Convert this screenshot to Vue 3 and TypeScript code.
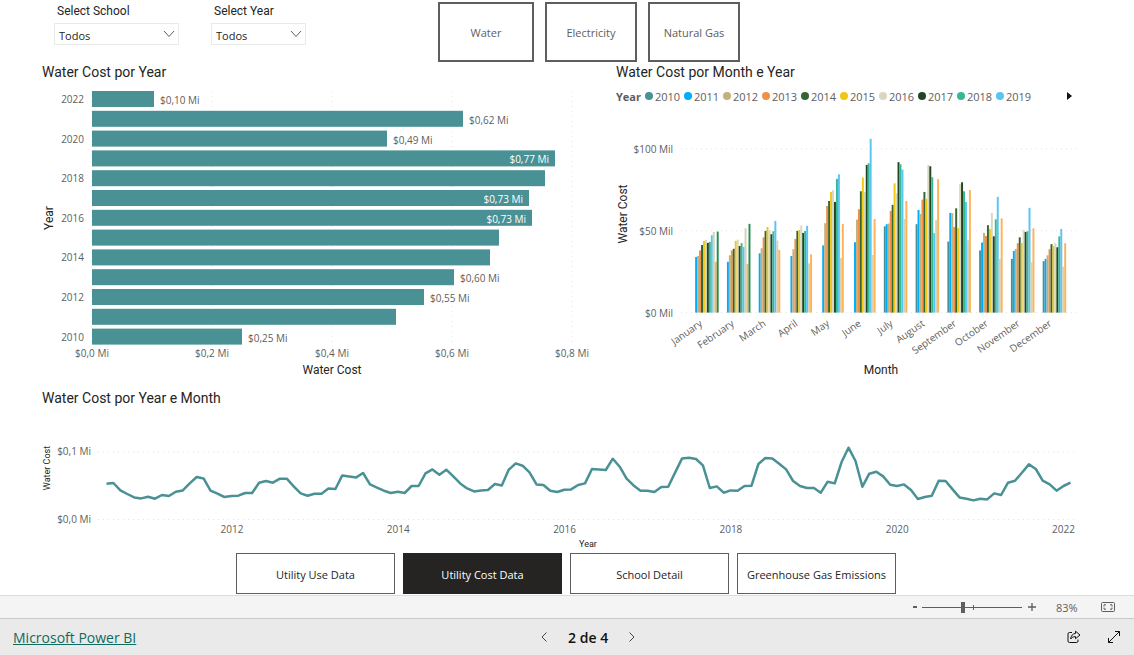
<script setup lang="ts">
import { ref } from 'vue'

interface YearBar { year: number; width: number; label?: string; inside?: boolean }
interface Series { year: number; color: string }

const school = ref('Todos')
const year = ref('Todos')
const zoomLevel = ref(83)
const zoomPosition = ref(41)

const utilities = ['Water', 'Electricity', 'Natural Gas']
const pages = ['Utility Use Data', 'Utility Cost Data', 'School Detail', 'Greenhouse Gas Emissions']
const activePage = ref('Utility Cost Data')

/* Horizontal bars, newest year first */
const yearBars: YearBar[] = [
  { year: 2022, width: 62, label: '$0,10 Mi' },
  { year: 2021, width: 371, label: '$0,62 Mi' },
  { year: 2020, width: 295, label: '$0,49 Mi' },
  { year: 2019, width: 463, label: '$0,77 Mi', inside: true },
  { year: 2018, width: 453 },
  { year: 2017, width: 437, label: '$0,73 Mi', inside: true },
  { year: 2016, width: 440, label: '$0,73 Mi', inside: true },
  { year: 2015, width: 407 },
  { year: 2014, width: 398 },
  { year: 2013, width: 362, label: '$0,60 Mi' },
  { year: 2012, width: 332, label: '$0,55 Mi' },
  { year: 2011, width: 304 },
  { year: 2010, width: 150, label: '$0,25 Mi' },
]
const barTop = (i: number) => 9 + i * 19.8
const yearTicks = ['$0,0 Mi', '$0,2 Mi', '$0,4 Mi', '$0,6 Mi', '$0,8 Mi'].map((label, i) => ({ label, x: 50 + i * 120 }))

/* Clustered columns, in thousands of dollars; null where the year has no reading */
const series: Series[] = [
  { year: 2010, color: '#499195' },
  { year: 2011, color: '#00acfc' },
  { year: 2012, color: '#c4b07b' },
  { year: 2013, color: '#f18f49' },
  { year: 2014, color: '#326633' },
  { year: 2015, color: '#f1c716' },
  { year: 2016, color: '#d8d7bf' },
  { year: 2017, color: '#224624' },
  { year: 2018, color: '#37b794' },
  { year: 2019, color: '#5bc5f2' },
  { year: 2020, color: '#d5d2b8' },
  { year: 2021, color: '#feb35a' },
  { year: 2022, color: '#268d54' },
]
const legend = series.slice(0, 10)
const months: { name: string; values: (number | null)[] }[] = [
  { name: 'January', values: [null, 34, 34.6, 38, 41.3, 43.8, 44.4, 42.6, 43.2, 47.3, 49.3, 31, 49.5] },
  { name: 'February', values: [null, 31, 35, 38, 39, 43.8, 44.6, 40.7, 42.4, 40.1, 51.5, 29.7, 54.2] },
  { name: 'March', values: [null, 36.2, 39.3, 46, 49.9, 52.3, 50.5, 47.9, 49.7, 56, 44, 38.3] },
  { name: 'April', values: [null, 34.6, 38.7, 45, 49.9, 50.5, 53.2, 48.7, 49.9, 53, 30.1, 35.6] },
  { name: 'May', values: [null, 41.1, 54.6, 65.2, 68.2, 73.7, 74.7, 67.6, 81.7, 84.5, 33.4, 54.2] },
  { name: 'June', values: [null, 43, 56.8, 63.1, 74.1, 82.5, 73.7, 90.2, 91.2, 106.1, 35.2, 57.2] },
  { name: 'July', values: [52.7, 54, 54.4, 62.1, 65.8, 79, 72.9, 91.9, 90.6, 87.4, 57.2, 68.2] },
  { name: 'August', values: [54, 62.7, 60.3, 69, 73.7, 69.5, 90.2, 89.4, 82.7, 48.5, 56.6, 81.5] },
  { name: 'September', values: [43.4, 60.9, 60.7, 52.3, 63.7, 51.7, 78.4, 79.6, 74.1, 67.6, 44.2, 74.9] },
  { name: 'October', values: [38, 42.8, 48.7, 46.8, 53.4, 51.1, 60.9, 46.6, 57, 70.7, 32.8, 57.6] },
  { name: 'November', values: [32.8, 37.7, 38.9, 42.4, 46, 42.6, 50.5, 49.3, 49.7, 64, 30.8, 51.5] },
  { name: 'December', values: [31.4, 32.8, 35, 38.7, 41.8, 40.7, 42.4, 39.9, 46.6, 51.1, 28.1, 42.4] },
]
const monthBase = 206.6
const monthScale = 1.637
const columns = months.flatMap((m, mi) =>
  m.values.flatMap((v, si) =>
    v === null
      ? []
      : [{ key: `${mi}-${si}`, x: 77.2 + mi * 31.77 + si * 1.96, y: monthBase - v * monthScale, h: v * monthScale, color: series[si].color }],
  ),
)
const monthTicks = [100, 50, 0].map((v) => ({ label: `$${v} Mil`, y: monthBase - v * monthScale }))

/* Monthly cost from July 2010; 203 units make $0,1 Mi */
const monthly: number[] = [
  108, 110, 88, 77, 67, 64, 69, 63, 74, 71, 84, 88, 109, 128, 124, 87, 78, 68, 71, 72, 80, 80, 111, 116,
  111, 123, 123, 100, 79, 72, 78, 78, 94, 92, 133, 130, 127, 140, 106, 96, 87, 80, 84, 80, 101, 101, 139,
  151, 135, 150, 130, 109, 94, 85, 88, 89, 107, 103, 150, 169, 162, 142, 106, 104, 87, 83, 90, 91, 104,
  109, 152, 151, 149, 183, 159, 123, 103, 87, 87, 83, 98, 99, 142, 184, 186, 182, 163, 95, 100, 81, 88,
  87, 101, 102, 167, 185, 184, 168, 151, 116, 101, 95, 95, 81, 114, 109, 173, 216, 176, 99, 138, 144,
  130, 105, 101, 106, 89, 62, 68, 72, 117, 116, 91, 67, 63, 58, 63, 61, 79, 74, 111, 117, 141, 166, 152,
  117, 106, 87, 101, 111,
]
const linePoints = monthly.map((v, i) => `${(64.5 + i * 6.935).toFixed(1)},${(111.7 - v / 3).toFixed(1)}`).join(' ')
const lineTicks = [2012, 2014, 2016, 2018, 2020, 2022].map((label, i) => ({ label, x: 190 + i * 166.3 }))
</script>

<template>
  <div class="app">
    <main class="report">
      <header class="top">
        <div class="filter school">
          <label for="school">Select School</label>
          <div class="select-box">
            <select id="school" v-model="school"><option>Todos</option></select>
            <svg class="chevron" viewBox="0 0 12 8" aria-hidden="true"><path d="M1 1l5 5.5L11 1" /></svg>
          </div>
        </div>
        <div class="filter year">
          <label for="year">Select Year</label>
          <div class="select-box">
            <select id="year" v-model="year"><option>Todos</option></select>
            <svg class="chevron" viewBox="0 0 12 8" aria-hidden="true"><path d="M1 1l5 5.5L11 1" /></svg>
          </div>
        </div>
        <nav class="utilities">
          <button v-for="u in utilities" :key="u" type="button">{{ u }}</button>
        </nav>
      </header>

      <div class="charts">
        <section>
          <h2>Water Cost por Year</h2>
          <svg class="chart" viewBox="0 0 574 306" role="img" aria-label="Water Cost por Year">
            <line v-for="t in yearTicks" :key="t.x" class="grid" :x1="t.x" :x2="t.x" y1="9" y2="263" />
            <g v-for="(b, i) in yearBars" :key="b.year">
              <rect class="bar" x="50" :y="barTop(i)" :width="b.width" height="16" />
              <text v-if="i % 2 === 0" class="tick end" x="42" :y="barTop(i) + 12">{{ b.year }}</text>
              <text v-if="b.label && !b.inside" class="tick" :x="56 + b.width" :y="barTop(i) + 13">{{ b.label }}</text>
              <text v-if="b.label && b.inside" class="tick end inside" :x="44 + b.width" :y="barTop(i) + 13">{{ b.label }}</text>
            </g>
            <text v-for="t in yearTicks" :key="t.label" class="tick mid" :x="t.x" y="275">{{ t.label }}</text>
            <text class="axis mid" x="290" y="292">Water Cost</text>
            <text class="axis mid" transform="translate(11 136) rotate(-90)">Year</text>
          </svg>
        </section>

        <section>
          <h2>Water Cost por Month e Year</h2>
          <div class="legend">
            <strong>Year</strong>
            <ul>
              <li v-for="s in legend" :key="s.year">
                <i :style="{ background: s.color }"></i>{{ s.year }}
              </li>
            </ul>
            <button type="button" aria-label="Next"><svg viewBox="0 0 6 8"><path d="M0 0l5 4-5 4z" /></svg></button>
          </div>
          <svg class="chart" viewBox="0 0 518 282" role="img" aria-label="Water Cost por Month e Year">
            <g v-for="t in monthTicks" :key="t.label">
              <line class="grid" x1="65" x2="462" :y1="t.y" :y2="t.y" />
              <text class="tick end" x="57" :y="t.y + 4">{{ t.label }}</text>
            </g>
            <rect v-for="c in columns" :key="c.key" :x="c.x" :y="c.y" width="1.96" :height="c.h" :fill="c.color" />
            <text
              v-for="(m, i) in months"
              :key="m.name"
              class="tick end"
              :transform="`translate(${87 + i * 31.77} 219) rotate(-35)`"
            >{{ m.name }}</text>
            <text class="axis mid" x="265" y="268">Month</text>
            <text class="axis mid" transform="translate(11 108) rotate(-90)">Water Cost</text>
          </svg>
        </section>
      </div>

      <section class="trend">
        <h2>Water Cost por Year e Month</h2>
        <svg class="chart" viewBox="0 0 1092 145" role="img" aria-label="Water Cost por Year e Month">
          <line class="grid" x1="56" x2="1034" y1="44" y2="44" />
          <line class="grid" x1="56" x2="1034" y1="111.5" y2="111.5" />
          <text class="tick end" x="49" y="47">$0,1 Mi</text>
          <text class="tick end" x="49" y="115">$0,0 Mi</text>
          <polyline class="trend-line" :points="linePoints" />
          <text v-for="t in lineTicks" :key="t.label" class="tick mid" :x="t.x" y="125">{{ t.label }}</text>
          <text class="axis small mid" x="546" y="139">Year</text>
          <text class="axis small mid" transform="translate(8 60) rotate(-90)">Water Cost</text>
        </svg>
      </section>

      <nav class="pages">
        <button
          v-for="p in pages"
          :key="p"
          type="button"
          :class="{ active: p === activePage }"
          @click="activePage = p"
        >{{ p }}</button>
      </nav>
    </main>

    <div class="status">
      <button type="button" class="step" aria-label="Zoom out"><svg viewBox="0 0 10 10"><path d="M3 5h4" stroke-width="2" /></svg></button>
      <input v-model="zoomPosition" type="range" min="0" max="100" aria-label="Zoom" />
      <button type="button" class="step" aria-label="Zoom in"><svg viewBox="0 0 10 10"><path d="M1 5h8M5 1v8" stroke-width="1.3" /></svg></button>
      <output>{{ zoomLevel }}%</output>
      <button type="button" class="fit" aria-label="Fit to page">
        <svg viewBox="0 0 14 10"><rect x=".5" y=".5" width="13" height="9" rx="1" /><path d="M5 2.8H3v1.7M9 2.8h2v1.7M5 7.2H3V5.5M9 7.2h2V5.5" /></svg>
      </button>
    </div>

    <footer class="bottom">
      <a href="#">Microsoft Power BI</a>
      <div class="pager">
        <button type="button" aria-label="Previous page"><svg viewBox="0 0 6 10"><path d="M5.5 .5L1 5l4.5 4.5" /></svg></button>
        <span>2 de 4</span>
        <button type="button" aria-label="Next page"><svg viewBox="0 0 6 10"><path d="M.5 .5L5 5 .5 9.5" /></svg></button>
      </div>
      <div class="actions">
        <button type="button" aria-label="Share">
          <svg viewBox="0 0 14 14"><path d="M5 2.500H2.500a1.500 1.500 0 0 0-1.500 1.500v7a1.500 1.500 0 0 0 1.500 1.500h7a1.500 1.500 0 0 0 1.500-1.500v-1.500M8.500 1.200L13 5 8.500 8.700V6.600C6.300 6.600 5 7.300 3.700 9c.2-3.300 2-5.300 4.800-5.600z" /></svg>
        </button>
        <button type="button" aria-label="Full screen">
          <svg viewBox="0 0 14 14"><path d="M1.500 12.500l11-11M8 1.500h4.500V6M1.500 8v4.500H6" /></svg>
        </button>
      </div>
    </footer>
  </div>
</template>

<style>
body {
  margin: 0;
}
</style>

<style scoped>
.app {
  display: flex;
  flex-direction: column;
  min-height: 100vh;
  background: #fff;
  color: #252423;
  font-family: "Open Sans", "Noto Sans", sans-serif;
  font-size: 11px;
}
button {
  margin: 0;
  padding: 0;
  border: 0;
  background: none;
  color: inherit;
  font: inherit;
  cursor: pointer;
}
.report {
  flex: 1;
}
.top {
  display: flex;
  padding: 2px 0 0 54px;
}
.filter label {
  display: block;
  padding: 1px 0 4px 3px;
  font: 12px/16px Roboto, sans-serif;
}
.filter.school {
  width: 125px;
  margin-right: 32px;
}
.filter.year {
  width: 95px;
}
.select-box {
  position: relative;
}
.select-box select {
  display: block;
  width: 100%;
  height: 22px;
  padding: 2px 4px 0;
  border: 1px solid #eaeaea;
  border-radius: 0;
  background: #fff;
  color: #252423;
  font: inherit;
  appearance: none;
}
.chevron {
  position: absolute;
  top: 7px;
  right: 4px;
  width: 12px;
  height: 8px;
  fill: none;
  stroke: #605e5c;
  pointer-events: none;
}
.utilities {
  display: flex;
  gap: 11px;
  margin-left: 132px;
}
.utilities button {
  width: 92px;
  height: 60px;
  border: 2px solid #605e5c;
  color: #605e5c;
}
.utilities button:first-child {
  width: 96px;
}
.charts {
  display: grid;
  grid-template-columns: 574fr 518fr;
  padding-left: 42px;
}
h2 {
  margin: 0;
  font: 14px/20px Roboto, sans-serif;
}
.chart {
  display: block;
  width: 100%;
  height: auto;
}
.grid {
  stroke: #e3e3e3;
  stroke-dasharray: 1 4;
}
.bar {
  fill: #499195;
}
.tick {
  fill: #605e5c;
  font-size: 10px;
}
.axis {
  fill: #252423;
  font: 12px Roboto, sans-serif;
}
.axis.small {
  font-size: 9px;
}
.end {
  text-anchor: end;
}
.mid {
  text-anchor: middle;
}
.inside {
  fill: #fff;
}
.legend {
  display: flex;
  align-items: center;
  height: 18px;
  margin: 5px 0 1px;
  color: #605e5c;
}
.legend strong {
  width: 29px;
}
.legend ul {
  display: flex;
  margin: 0;
  padding: 0;
  list-style: none;
}
.legend li {
  display: flex;
  align-items: center;
  gap: 2px;
  width: 39px;
}
.legend i {
  flex: none;
  width: 8px;
  height: 8px;
  border-radius: 50%;
}
.legend button {
  display: flex;
  margin-left: 32px;
}
.legend svg {
  width: 6px;
  height: 8px;
  fill: #111;
}
.trend {
  padding-left: 42px;
}
.trend-line {
  fill: none;
  stroke: #499195;
  stroke-width: 2.5;
  stroke-linejoin: round;
}
.pages {
  display: flex;
  justify-content: center;
  gap: 8px;
  padding: 0 2px 1px 0;
}
.pages button {
  width: 159px;
  height: 41px;
  padding-top: 2px;
  border: 1px solid #605e5c;
}
.pages .active {
  border-color: #252423;
  background: #252423;
  color: #fff;
}
.status {
  display: flex;
  align-items: center;
  justify-content: flex-end;
  height: 22px;
  padding-right: 19px;
  border-top: 1px solid #dcdcdc;
  background: #f4f4f4;
  color: #605e5c;
}
.status svg {
  display: block;
  fill: none;
  stroke: #605e5c;
}
.step svg {
  width: 10px;
  height: 10px;
}
.status input {
  width: 100px;
  height: 12px;
  margin: 0 5px 0 2px;
  background:
    linear-gradient(#605e5c, #605e5c) 51px 50% / 1px 5px no-repeat,
    linear-gradient(#605e5c, #605e5c) 0 50% / 100% 1px no-repeat;
  appearance: none;
}
.status input::-webkit-slider-thumb {
  width: 4px;
  height: 11px;
  background: #605e5c;
  appearance: none;
}
.status output {
  width: 45px;
  margin-left: 19px;
}
.fit svg {
  width: 14px;
  height: 10px;
}
.bottom {
  display: flex;
  align-items: center;
  justify-content: space-between;
  height: 36px;
  padding-left: 13px;
  border-top: 1px solid #c8c8c8;
  background: #eaeaea;
}
.bottom a {
  color: #0f6b5f;
  font-size: 14px;
}
.bottom svg {
  display: block;
  fill: none;
  stroke: #111;
}
.pager {
  display: flex;
  align-items: center;
  gap: 21px;
  color: #111;
  font-size: 14px;
  font-weight: 600;
}
.pager svg {
  width: 6px;
  height: 10px;
  stroke: #444;
}
.actions {
  display: flex;
  padding-left: 14px;
}
.actions button {
  display: flex;
  justify-content: center;
  width: 40px;
}
.actions svg {
  width: 14px;
  height: 14px;
}
</style>
